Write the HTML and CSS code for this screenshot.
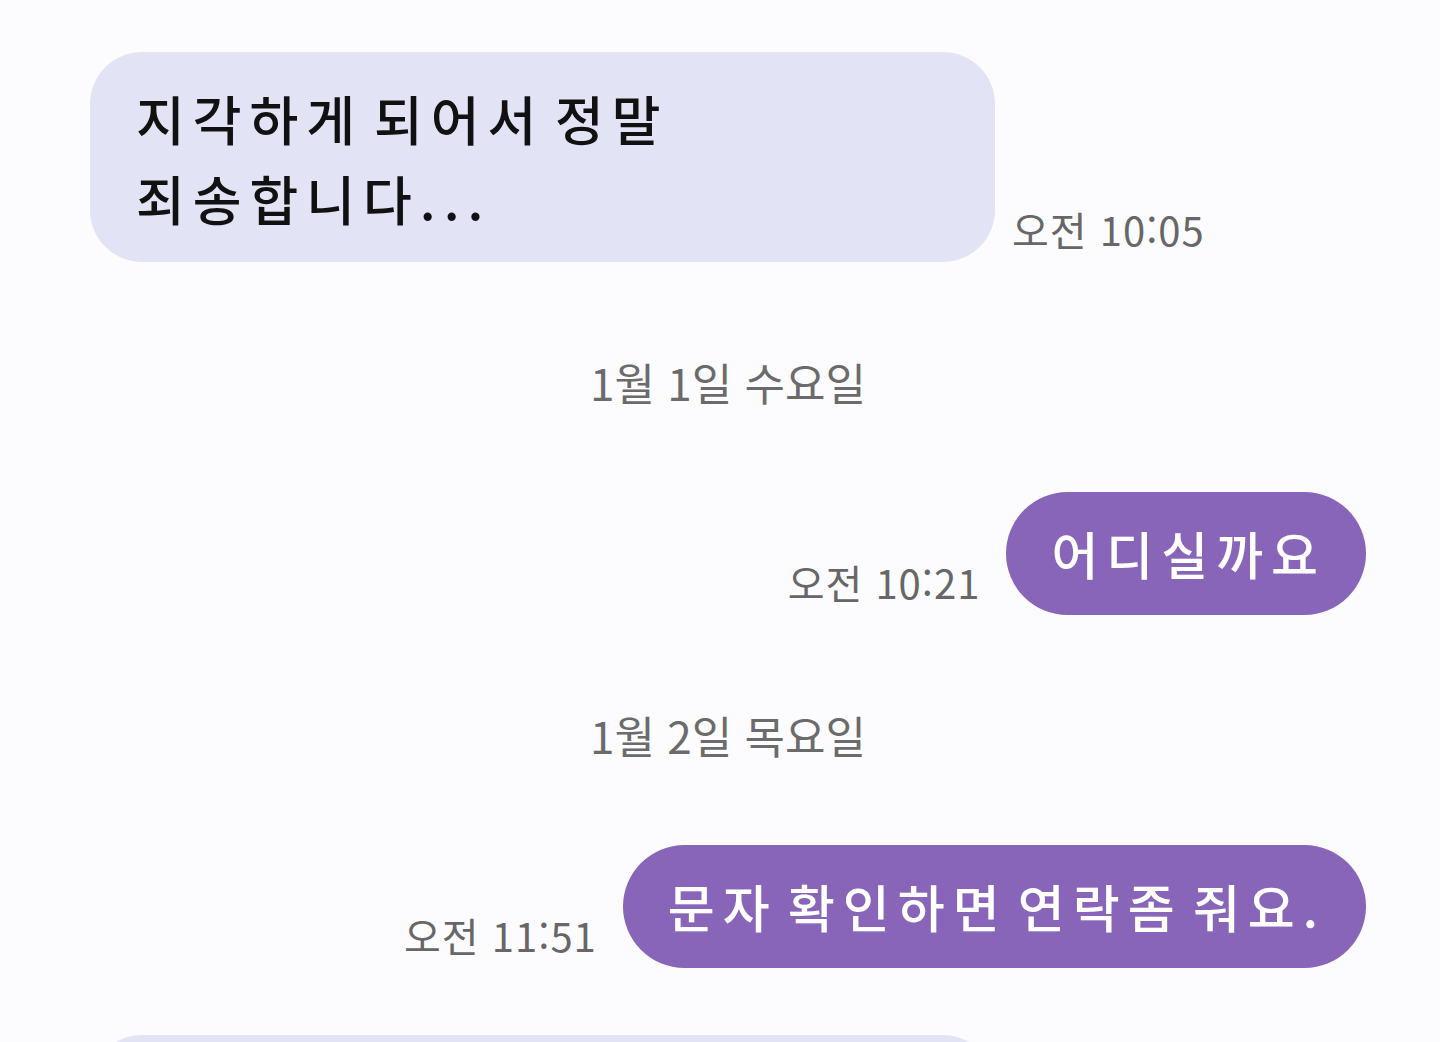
FILE: index.html
```html
<!DOCTYPE html>
<html lang="ko">
<head>
    <meta charset="UTF-8">
    <meta name="viewport" content="width=device-width, initial-scale=1.0">
    <title>채팅</title>
    <link rel="stylesheet" href="styles.css">
</head>
<body>
    <div class="chat">
        <div class="row received first">
            <div class="bubble in">지각하게 되어서 정말<br>죄송합니다...</div>
            <span class="time">오전 10:05</span>
        </div>

        <div class="date">1월 1일 수요일</div>

        <div class="row sent">
            <span class="time">오전 10:21</span>
            <div class="bubble out">어디실까요</div>
        </div>

        <div class="date">1월 2일 목요일</div>

        <div class="row sent">
            <span class="time">오전 11:51</span>
            <div class="bubble out">문자 확인하면 연락좀 줘요.</div>
        </div>

        <div class="row received last">
            <div class="bubble in">&nbsp;<br>&nbsp;</div>
        </div>
    </div>
</body>
</html>
```

FILE: styles.css
```css
body {
    margin: 0;
    background-color: #fcfcfe;
    font-family: "Noto Sans CJK KR", "Noto Sans", sans-serif;
    overflow: hidden;
}
.chat {
    display: flex;
    flex-direction: column;
    padding: 52px 74px 0 90px;
}
.row {
    display: flex;
    align-items: flex-end;
}
.received {
    gap: 17px;
}
.sent {
    justify-content: flex-end;
    gap: 26px;
}
.last {
    margin-top: 67px;
}
.bubble {
    font-weight: 500;
    word-spacing: -12px;
}
.bubble.in {
    width: 813px;
    background-color: #e3e3f6;
    color: #111;
    font-size: 53px;
    letter-spacing: 8px;
    line-height: 80px;
    padding: 26px 46px 24px;
    border-radius: 52px;
}
.bubble.out {
    background-color: #8865b9;
    color: #fff;
    font-size: 51px;
    letter-spacing: 8px;
    line-height: 60px;
    padding: 31px 40px 32px 45px;
    border-radius: 62px;
}
.time {
    font-size: 40px;
    line-height: 50px;
    letter-spacing: 1px;
    color: #676767;
    margin-bottom: 8px;
    white-space: nowrap;
}
.date {
    text-align: center;
    font-size: 44px;
    line-height: 60px;
    color: #6b6b6b;
    margin: 90px 0 80px;
}
```
